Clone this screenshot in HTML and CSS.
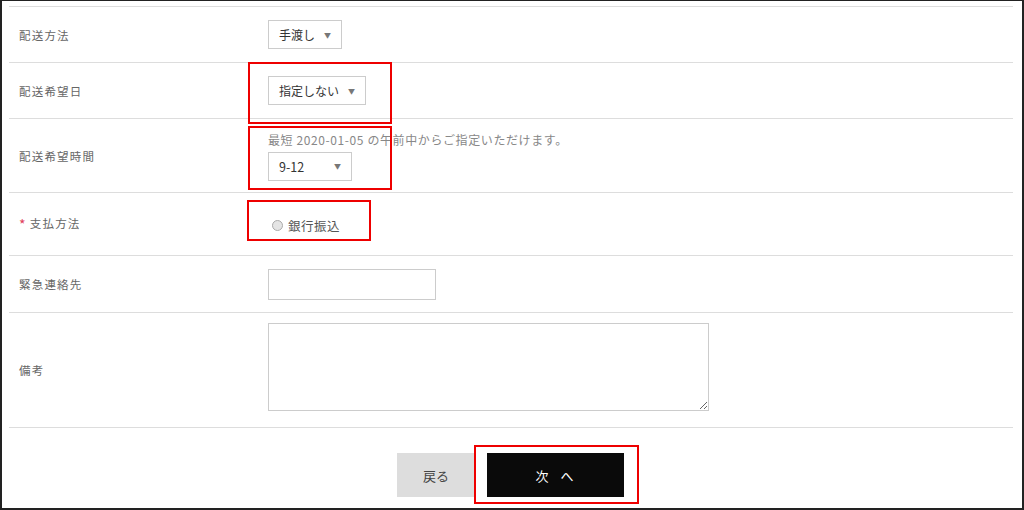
FILE: index.html
```html
<!DOCTYPE html>
<html lang="ja">
<head>
  <meta charset="UTF-8" />
  <title>配送・お支払い</title>
  <link rel="stylesheet" href="styles.css">
</head>
<body>
  <div class="frame">
    <div class="form">
      <div class="row row-s">
        <div class="label">配送方法</div>
        <div class="field">
          <div class="select">手渡し<span class="arrow">▼</span></div>
        </div>
      </div>
      <div class="row row-s">
        <div class="label">配送希望日</div>
        <div class="field">
          <div class="select">指定しない<span class="arrow">▼</span></div>
        </div>
      </div>
      <div class="row row-time">
        <div class="label">配送希望時間</div>
        <div class="field">
          <p class="note">最短 2020-01-05 の午前中からご指定いただけます。</p>
          <div class="select sel-time">9-12<span class="arrow">▼</span></div>
        </div>
      </div>
      <div class="row row-pay">
        <div class="label"><span class="req">*</span>支払方法</div>
        <div class="field">
          <label class="radio"><span class="dot"></span>銀行振込</label>
        </div>
      </div>
      <div class="row row-tel">
        <div class="label">緊急連絡先</div>
        <div class="field">
          <input type="text" class="text-input" />
        </div>
      </div>
      <div class="row row-memo">
        <div class="label">備考</div>
        <div class="field">
          <textarea class="memo"></textarea>
        </div>
      </div>
    </div>

    <div class="actions">
      <button class="btn btn-back">戻る</button>
      <button class="btn btn-next">次&nbsp;&nbsp;へ</button>
    </div>

    <div class="mark mark-date"></div>
    <div class="mark mark-time"></div>
    <div class="mark mark-pay"></div>
    <div class="mark mark-next"></div>
  </div>
</body>
</html>
```

FILE: styles.css
```css
html, body {
  margin: 0;
  padding: 0;
}

body {
  font-family: "Noto Sans CJK JP", "Liberation Sans", sans-serif;
  color: #555;
  background: #fff;
}

.frame {
  position: relative;
  width: 1024px;
  height: 510px;
  box-sizing: border-box;
  border: 2px solid #222;
  border-top-width: 1px;
  padding: 5px 9px 0 7px;
  overflow: hidden;
}

.form {
  border-top: 1px solid #ddd;
  width: 1004px;
}

.row {
  display: flex;
  align-items: center;
  border-bottom: 1px solid #ddd;
  box-sizing: border-box;
}

.row-s { height: 56px; }
.row-time { height: 74px; }
.row-pay { height: 63px; }
.row-tel { height: 57px; }
.row-memo { height: 115px; }

.label {
  width: 249px;
  padding-left: 10px;
  font-size: 11.5px;
  letter-spacing: 1.2px;
  color: #666;
}

.req {
  color: #e0405a;
  font-size: 14px;
  margin-right: 3px;
  vertical-align: -2px;
}

.field {
  flex: 1;
}

.select {
  display: inline-flex;
  align-items: center;
  height: 29px;
  box-sizing: border-box;
  border: 1px solid #ccc;
  padding: 0 10px 0 10px;
  font-size: 12px;
  color: #333;
}

.sel-time {
  width: 84px;
  justify-content: space-between;
  font-size: 12.5px;
}

.arrow {
  font-size: 7px;
  color: #777;
  margin-left: 9px;
}

.note {
  margin: 0 0 4px;
  font-size: 12px;
  letter-spacing: 0.6px;
  color: #888;
}

.radio {
  display: inline-flex;
  align-items: center;
  font-size: 12.5px;
  color: #555;
  letter-spacing: 0.5px;
  padding-left: 4px;
}

.dot {
  width: 9px;
  height: 9px;
  border: 1px solid #aaa;
  border-radius: 50%;
  background: #e4e4e4;
  margin-right: 5px;
}

.text-input {
  width: 168px;
  height: 31px;
  box-sizing: border-box;
  border: 1px solid #ccc;
  margin: 0;
}

.memo {
  display: block;
  width: 441px;
  height: 88px;
  box-sizing: border-box;
  border: 1px solid #ccc;
  margin: 0 0 6px;
  resize: both;
}

.actions {
  display: flex;
  justify-content: center;
  gap: 12px;
  padding: 25px 1px 0 0;
}

.btn {
  height: 44px;
  border: none;
  font-family: "Noto Sans CJK JP", sans-serif;
  font-size: 13px;
  cursor: pointer;
}

.btn-back {
  width: 78px;
  background: #ddd;
  color: #444;
}

.btn-next {
  width: 137px;
  background: #0a0a0a;
  color: #fff;
  letter-spacing: 2px;
}

.mark {
  position: absolute;
  border: 2px solid #e00;
}

.mark-date { left: 246px; top: 61px; width: 140px; height: 58px; }
.mark-time { left: 246px; top: 125px; width: 140px; height: 60px; }
.mark-pay { left: 245px; top: 199px; width: 120px; height: 37px; }
.mark-next { left: 472px; top: 444px; width: 161px; height: 55px; }
```
